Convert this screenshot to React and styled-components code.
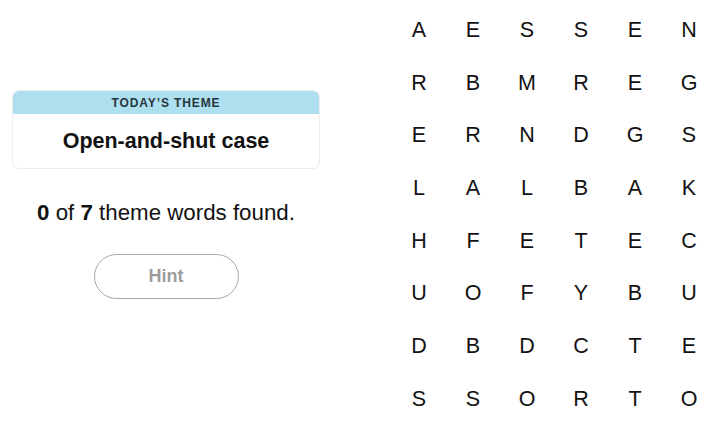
import React from 'react';
import styled, { createGlobalStyle } from 'styled-components';

const GlobalStyle = createGlobalStyle`
  html, body {
    margin: 0;
    padding: 0;
    background: #fff;
  }
  body {
    font-family: "Liberation Sans", Arial, sans-serif;
    color: #121212;
  }
`;

const Page = styled.div`
  display: flex;
  width: 720px;
  height: 427px;
  overflow: hidden;
`;

const Side = styled.div`
  flex-shrink: 0;
  width: 308px;
  padding: 90px 12px 0;
  display: flex;
  flex-direction: column;
  align-items: center;
`;

const ThemeCard = styled.div`
  box-sizing: border-box;
  width: 100%;
  border: 1px solid #ececec;
  border-radius: 7px;
  overflow: hidden;
  background: #fff;
`;

const ThemeHeader = styled.div`
  background: #aedfee;
  height: 23px;
  display: flex;
  align-items: center;
  justify-content: center;
  font-size: 12px;
  font-weight: 700;
  letter-spacing: 0.9px;
  color: #26363f;
`;

const ThemeBody = styled.div`
  height: 54px;
  display: flex;
  align-items: center;
  justify-content: center;
  font-size: 21.5px;
  font-weight: 700;
  color: #121212;
`;

const Progress = styled.p`
  margin: 31px 0 0;
  font-size: 22.3px;
  line-height: 26px;
  color: #121212;

  b {
    font-weight: 700;
  }
`;

const HintButton = styled.button`
  margin-top: 28px;
  width: 145px;
  height: 45px;
  border: 1.5px solid #a8a8a8;
  border-radius: 23px;
  background: #fff;
  color: #9c9c9c;
  font-family: inherit;
  font-size: 18px;
  font-weight: 700;
`;

const Board = styled.div`
  flex-shrink: 0;
  margin-left: 60px;
  padding-top: 4px;
  display: grid;
  grid-template-columns: repeat(6, 54px);
  grid-auto-rows: 52.7px;
`;

const Cell = styled.div`
  display: flex;
  align-items: center;
  justify-content: center;
  font-size: 21.5px;
  color: #121212;
`;

const letters = [
  'AESSEN',
  'RBMREG',
  'ERNDGS',
  'LALBAK',
  'HFETEC',
  'UOFYBU',
  'DBDCTE',
  'SSORTO',
];

export default function App() {
  return (
    <Page>
      <GlobalStyle />
      <Side>
        <ThemeCard>
          <ThemeHeader>TODAY’S THEME</ThemeHeader>
          <ThemeBody>Open-and-shut case</ThemeBody>
        </ThemeCard>
        <Progress>
          <b>0</b> of <b>7</b> theme words found.
        </Progress>
        <HintButton>Hint</HintButton>
      </Side>
      <Board>
        {letters.map((row, r) =>
          row.split('').map((ch, c) => <Cell key={`${r}-${c}`}>{ch}</Cell>)
        )}
      </Board>
    </Page>
  );
}
